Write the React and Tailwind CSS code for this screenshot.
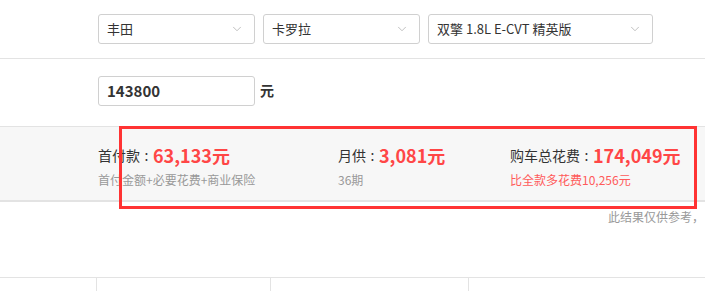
import { ChevronDown } from 'lucide-react'

const font = { fontFamily: '"Noto Sans CJK SC", "Microsoft YaHei", sans-serif' }

function Select({ label, width }) {
  return (
    <div
      className={`flex h-[30px] items-center justify-between rounded-[3px] border border-[#d0d0d0] bg-white pl-[8px] pr-[10px] ${width}`}
    >
      <span className="text-[13px] text-[#333]">{label}</span>
      <ChevronDown className="h-[14px] w-[14px] text-[#aaa]" strokeWidth={1.25} />
    </div>
  )
}

function Stat({ label, value, note, noteClass, width }) {
  return (
    <div className={`flex flex-col ${width}`}>
      <div className="flex h-[24px] items-center whitespace-nowrap">
        <span className="text-[14px] text-[#333]">{label}</span>
        <span className="inline-block w-[13px] text-center text-[14px] text-[#333]">:</span>
        <span className="text-[18px] font-bold text-[#ff4646]">{value}</span>
      </div>
      <div className={`mt-[4px] h-[18px] whitespace-nowrap text-[12px] leading-[18px] ${noteClass}`}>{note}</div>
    </div>
  )
}

export default function App() {
  return (
    <div className="relative h-[291px] w-[705px] overflow-hidden bg-white" style={font}>
      <div className="flex h-[59px] gap-[8px] border-b border-[#e3e3e3] pl-[98px] pt-[14px]">
        <Select label="丰田" width="w-[157px]" />
        <Select label="卡罗拉" width="w-[157px]" />
        <Select label="双擎 1.8L E-CVT 精英版" width="w-[225px]" />
      </div>

      <div className="flex h-[67px] items-start gap-[5px] pl-[98px] pt-[17px]">
        <div className="flex h-[30px] w-[157px] items-center rounded-[3px] border border-[#d0d0d0] px-[8px] text-[15px] font-bold text-[#333]">
          143800
        </div>
        <span className="mt-[4px] text-[14px] font-bold text-[#333]">元</span>
      </div>

      <div className="flex h-[76px] border-t border-b-2 border-[#e3e3e3] bg-[#f7f7f7] pl-[98px] pt-[16px]">
        <Stat label="首付款" value="63,133元" note="首付金额+必要花费+商业保险" noteClass="text-[#999]" width="w-[240px]" />
        <Stat label="月供" value="3,081元" note="36期" noteClass="text-[#999]" width="w-[172px]" />
        <Stat label="购车总花费" value="174,049元" note="比全款多花费10,256元" noteClass="text-[#ff5a5a]" width="w-[190px]" />
      </div>

      <div className="flex h-[75px] items-start justify-end pr-[1px] pt-[6px]">
        <span className="whitespace-nowrap text-[12px] text-[#999]">此结果仅供参考，</span>
      </div>

      <div className="flex h-[14px] border-t border-[#e3e3e3]">
        <div className="w-[97px] border-r border-[#e3e3e3]" />
        <div className="w-[174px] border-r border-[#e3e3e3]" />
        <div className="w-[198px] border-r border-[#e3e3e3]" />
        <div className="flex-1" />
      </div>

      <div className="pointer-events-none absolute left-[119px] top-[126px] h-[83px] w-[578px] border-[3px] border-[#f33]" />
    </div>
  )
}
